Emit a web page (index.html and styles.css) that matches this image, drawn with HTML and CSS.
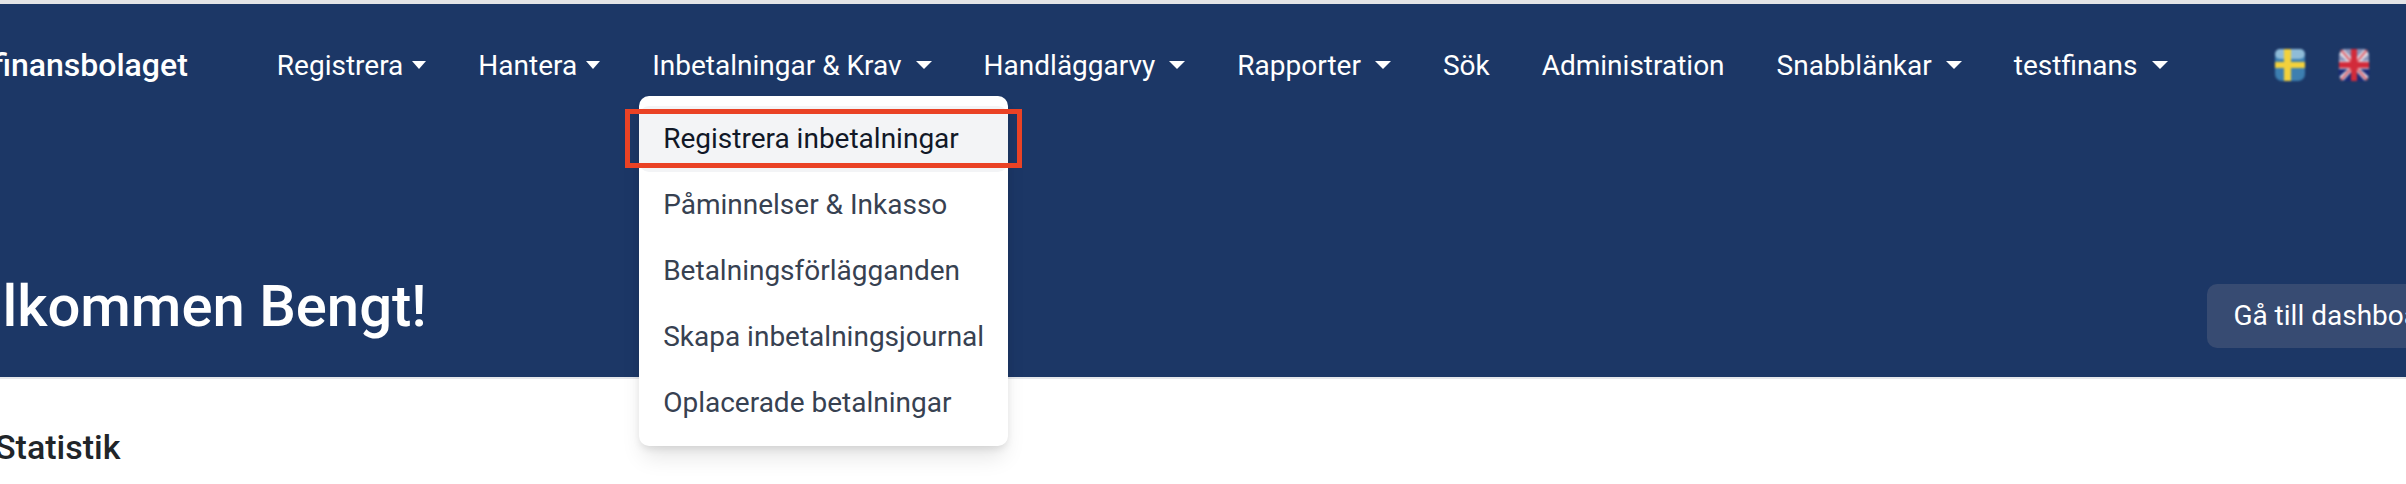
FILE: index.html
```html
<!DOCTYPE html>
<html lang="sv">
<head>
    <meta charset="UTF-8">
    <title>Testfinansbolaget</title>
    <link rel="stylesheet" href="styles.css">
</head>
<body>
<div class="header">
    <div class="navbar">
        <a href="#" class="brand">Testfinansbolaget</a>
        <div class="menu">
            <a href="#" class="menu-item tight">Registrera<span class="caret"></span></a>
            <a href="#" class="menu-item tight">Hantera<span class="caret"></span></a>
            <div class="menu-group">
                <a href="#" class="menu-item">Inbetalningar &amp; Krav<span class="caret"></span></a>
                <div class="dropdown">
                    <a href="#" class="dropdown-item active">Registrera inbetalningar<span class="callout"></span></a>
                    <a href="#" class="dropdown-item">Påminnelser &amp; Inkasso</a>
                    <a href="#" class="dropdown-item">Betalningsförlägganden</a>
                    <a href="#" class="dropdown-item">Skapa inbetalningsjournal</a>
                    <a href="#" class="dropdown-item">Oplacerade betalningar</a>
                </div>
            </div>
            <a href="#" class="menu-item">Handläggarvy<span class="caret"></span></a>
            <a href="#" class="menu-item">Rapporter<span class="caret"></span></a>
            <a href="#" class="menu-item">Sök</a>
            <a href="#" class="menu-item">Administration</a>
            <a href="#" class="menu-item">Snabblänkar<span class="caret"></span></a>
            <a href="#" class="menu-item">testfinans<span class="caret"></span></a>
        </div>
        <div class="flags">
            <svg class="flag" viewBox="0 0 30 32">
                <rect width="30" height="32" rx="7" fill="#3d7fb0"/>
                <rect width="30" height="10" rx="5" fill="#8fbcd8"/>
                <rect x="9" width="7" height="32" fill="#f2d13c"/>
                <rect y="13" width="30" height="6" fill="#f2d13c"/>
            </svg>
            <svg class="flag" viewBox="0 0 30 32">
                <rect width="30" height="32" rx="7" fill="#e6e3ea"/>
                <path d="M4 0 L12 8 V0 Z M18 0 V8 L26 0 Z M0 5 L8 12 H0 Z M30 5 L22 12 H30 Z" fill="#8a93b8"/>
                <path d="M0 20 H9 L0 28 Z M30 20 H21 L30 28 Z M4 32 L12 23 V32 Z M26 32 L18 23 V32 Z" fill="#1a2a78"/>
                <path d="M2 1 L28 31 M28 1 L2 31" stroke="#d9606c" stroke-width="2"/>
                <rect x="12" width="6" height="32" fill="#d22b3a"/>
                <rect y="13" width="30" height="6" fill="#d22b3a"/>
            </svg>
        </div>
    </div>
    <div class="hero">
        <h1>Välkommen Bengt!</h1>
        <a href="#" class="dashboard-btn">Gå till dashboard</a>
    </div>
</div>
<div class="content">
    <h2>Statistik</h2>
</div>
</body>
</html>
```

FILE: styles.css
```css
html, body {
    margin: 0;
    padding: 0;
    height: 100%;
    overflow: hidden;
}

body {
    font-family: Roboto, "Liberation Sans", sans-serif;
    background-color: white;
    width: 2406px;
}

a {
    text-decoration: none;
    color: inherit;
}

.header {
    height: 373px;
    background-color: #1c3766;
    border-top: 4px solid #e3e4e6;
    border-bottom: 2px solid #e5e7eb;
    color: white;
}

.navbar {
    display: flex;
    align-items: center;
    height: 122px;
    margin-left: -70px;
}

.brand {
    font-size: 32px;
    font-weight: 500;
    white-space: nowrap;
}

.menu {
    display: flex;
    align-items: center;
    gap: 52px;
    margin-left: 89px;
    font-size: 28px;
    white-space: nowrap;
}

.menu-group {
    position: relative;
}

.menu-item {
    display: flex;
    align-items: center;
}

.caret {
    width: 0;
    height: 0;
    margin-left: 14px;
    border-left: 8px solid transparent;
    border-right: 8px solid transparent;
    border-top: 8px solid white;
}

.menu-item.tight .caret {
    margin-left: 9px;
    border-left-width: 7px;
    border-right-width: 7px;
}

.dropdown {
    position: absolute;
    top: 47px;
    left: -13px;
    width: 369px;
    padding: 10px 0;
    background-color: white;
    border-radius: 10px;
    box-shadow: 0 15px 22px -4px rgba(0, 0, 0, 0.1), 0 4px 8px -2px rgba(0, 0, 0, 0.12);
    z-index: 10;
}

.dropdown-item {
    display: block;
    position: relative;
    height: 66px;
    line-height: 66px;
    padding-left: 24px;
    color: #374151;
    border-radius: 10px;
}

.dropdown-item.active {
    color: #111827;
    background-color: #f3f4f6;
}

.callout {
    position: absolute;
    top: 3px;
    left: -14px;
    width: 387px;
    height: 49px;
    border: 5px solid #ea4225;
}

.flags {
    display: flex;
    gap: 34px;
    margin-left: 107px;
}

.flag {
    display: block;
    width: 30px;
    height: 32px;
    filter: blur(1px);
}

.hero {
    display: flex;
    justify-content: space-between;
    align-items: flex-start;
    margin: 148px -64px 0 -65px;
}

.hero h1 {
    margin: 0;
    font-size: 58px;
    line-height: 64px;
    font-weight: 500;
}

.dashboard-btn {
    margin-top: 10px;
    padding: 0 26px;
    height: 64px;
    line-height: 64px;
    font-size: 28px;
    white-space: nowrap;
    border-radius: 10px;
    background-color: #374b72;
}

.content h2 {
    margin: 48px 0 0 -5px;
    font-size: 34px;
    line-height: 40px;
    font-weight: 500;
    color: #212529;
}
```
